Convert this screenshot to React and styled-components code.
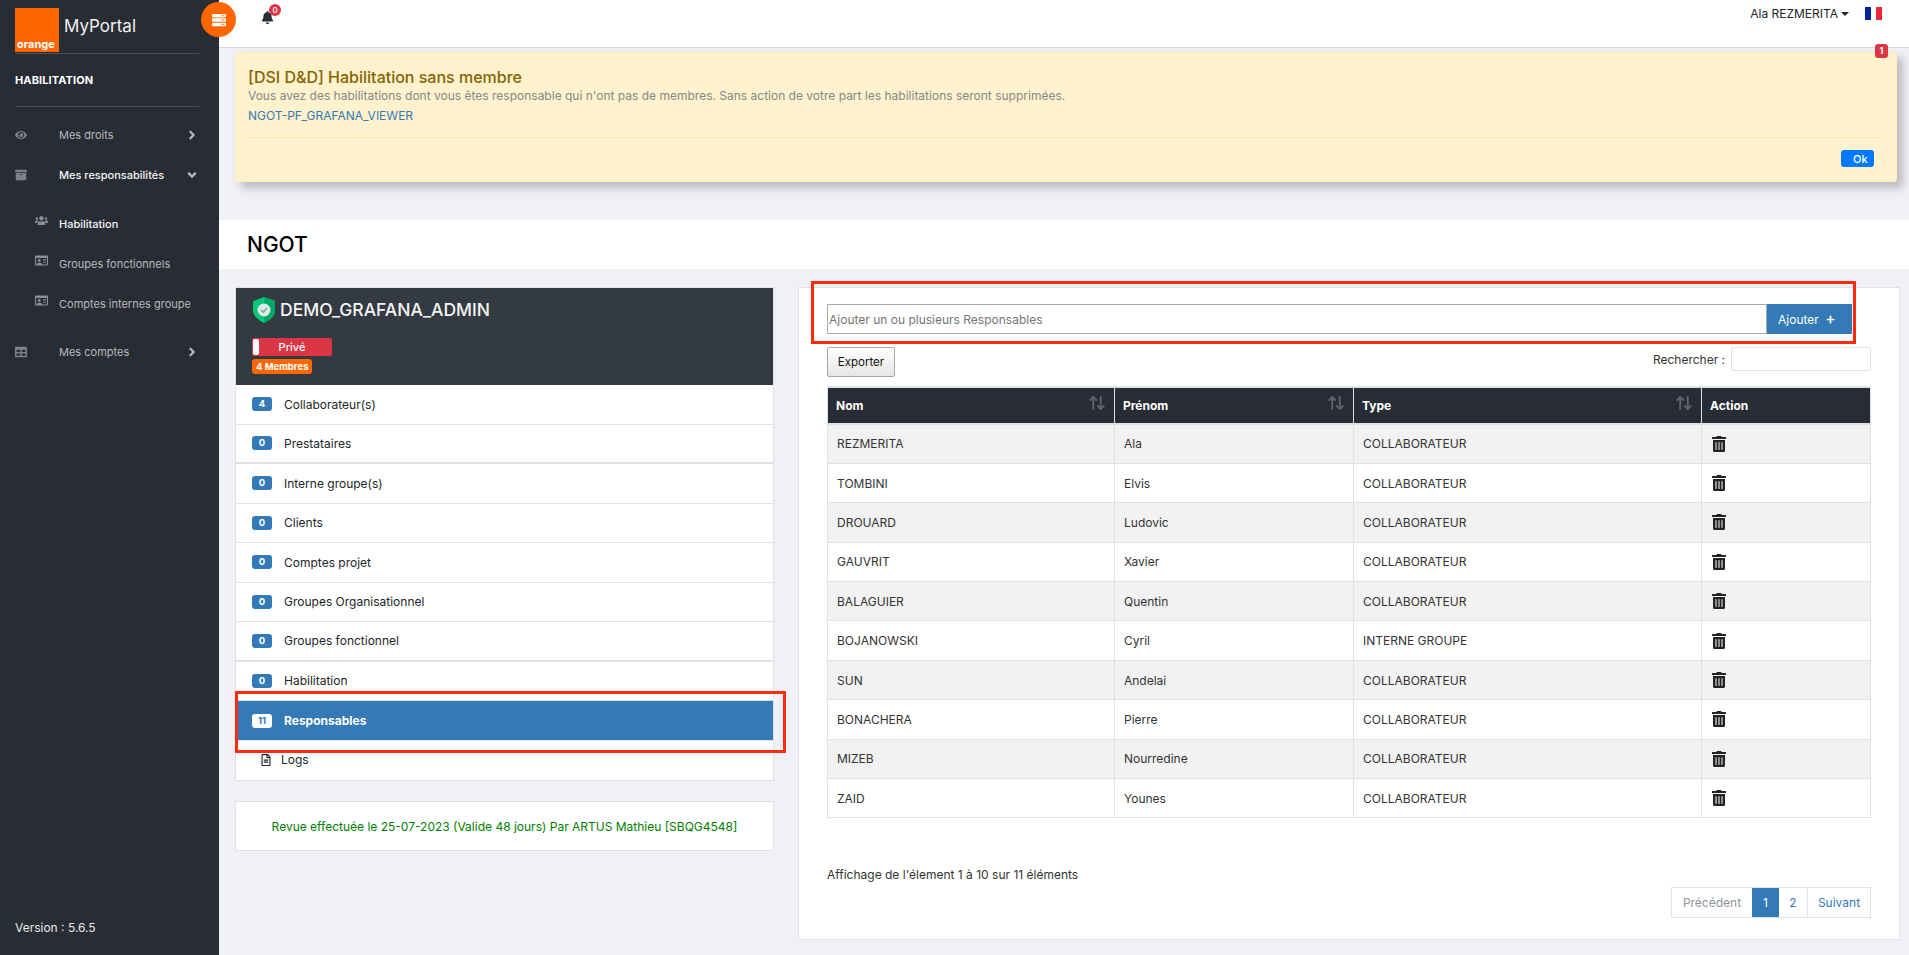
import styled, { createGlobalStyle } from "styled-components";
import {
  FaEye,
  FaArchive,
  FaUsers,
  FaRegIdCard,
  FaTable,
  FaAngleRight,
  FaAngleDown,
  FaBell,
  FaServer,
  FaTrashAlt,
  FaRegFileAlt,
  FaPlus,
} from "react-icons/fa";
import { ArrowUpDown } from "lucide-react";

const GlobalStyle = createGlobalStyle`
  * { box-sizing: border-box; }
  html, body { margin: 0; padding: 0; height: 100%; overflow: hidden; }
  body {
    font-family: Inter, "Noto Sans", sans-serif;
    font-size: 12px;
    color: #212529;
    background: #f0f1f7;
  }
`;

const Page = styled.div`
  position: relative;
  display: flex;
  width: 1909px;
  height: 955px;
  overflow: hidden;
`;

const Sidebar = styled.aside`
  display: flex;
  flex-direction: column;
  width: 219px;
  flex: none;
  padding: 6px 20px 0 15px;
  background: #282c34;
  color: #fff;
`;

const Brand = styled.div`
  display: flex;
  align-items: center;
  gap: 5px;
  height: 48px;
  padding-bottom: 0;
  border-bottom: 1px solid #4a4e55;
`;

const Logo = styled.div`
  display: flex;
  align-items: flex-end;
  width: 44px;
  height: 44px;
  padding: 0 0 1px 2px;
  background: #ff6600;
  font-size: 11px;
  font-weight: 700;
  line-height: 13px;
  color: #fff;
`;

const BrandName = styled.div`
  font-size: 17px;
  margin-bottom: 8px;
  color: #f2f2f2;
`;

const SectionTitle = styled.div`
  display: flex;
  align-items: center;
  height: 53px;
  font-size: 11px;
  font-weight: 700;
  letter-spacing: 0.1px;
  border-bottom: 1px solid #4a4e55;
`;

const Nav = styled.nav`
  display: flex;
  flex-direction: column;
  padding-top: 8px;
`;

const NavItem = styled.div`
  display: flex;
  align-items: center;
  height: 40px;
  padding-left: ${(p) => (p.$sub ? "20px" : "0")};
  font-size: 11px;
  font-weight: ${(p) => (p.$active ? 500 : 400)};
  color: ${(p) => (p.$active ? "#f4f4f4" : "#b6b8bb")};

  svg.lead {
    flex: none;
    width: 12px;
    height: 12px;
    margin-right: 32px;
    color: #7d828a;
  }
`;

const SubIcon = styled.span`
  display: flex;
  flex: none;
  width: 24px;
  margin-top: -8px;
  color: #8b9097;
  font-size: 13px;
`;

const NavLabel = styled.span`
  flex: 1;
`;

const Caret = styled.span`
  display: flex;
  color: #b6b8bb;
  font-size: 14px;
`;

const Version = styled.div`
  margin-top: auto;
  padding-bottom: 20px;
  font-size: 12px;
  color: #e9e9ea;
`;

const ToggleButton = styled.div`
  position: absolute;
  left: 201px;
  top: 2px;
  display: flex;
  align-items: center;
  justify-content: center;
  width: 35px;
  height: 35px;
  border-radius: 50%;
  background: #ff6600;
  color: #fff;
  font-size: 14px;
`;

const Main = styled.main`
  display: flex;
  flex-direction: column;
  flex: 1;
  min-width: 0;
`;

const TopBar = styled.header`
  display: flex;
  align-items: flex-start;
  justify-content: space-between;
  height: 48px;
  padding: 8px 27px 0 42px;
  background: #fff;
  border-bottom: 1px solid #d8d9e0;
`;

const BellWrap = styled.div`
  position: relative;
  margin-top: 3px;
  color: #282c34;
  font-size: 13px;
  line-height: 1;
`;

const BellBadge = styled.span`
  position: absolute;
  left: 8px;
  top: -7px;
  width: 12px;
  height: 12px;
  border-radius: 50%;
  background: #dc3545;
  color: #fff;
  font-size: 8px;
  font-weight: 500;
  line-height: 12px;
  text-align: center;
`;

const UserMenu = styled.div`
  display: flex;
  align-items: center;
  font-size: 12px;
  color: #212529;
  line-height: 12px;
  margin-top: -1px;
`;

const UserCaret = styled.span`
  width: 0;
  height: 0;
  margin: 0 16px 0 3px;
  border-left: 4px solid transparent;
  border-right: 4px solid transparent;
  border-top: 4px solid #212529;
`;

const Flag = styled.span`
  display: flex;
  width: 17px;
  height: 13px;
`;

const FlagBand = styled.span`
  flex: 1;
  background: ${(p) => p.$color};
`;

const Alert = styled.section`
  position: relative;
  margin: 4px 12px 0 16px;
  height: 130px;
  padding: 14px 13px 0 12px;
  background: #fff2cc;
  border: 1px solid #ffeeba;
  border-radius: 3px;
  box-shadow: 6px 6px 8px rgba(90, 85, 90, 0.35);
`;

const AlertTitle = styled.div`
  font-size: 16px;
  line-height: 20px;
  font-weight: 500;
  color: #856404;
`;

const AlertText = styled.div`
  font-size: 12px;
  line-height: 18px;
  color: #86888a;
`;

const AlertLink = styled.a`
  display: block;
  font-size: 12px;
  line-height: 21px;
  color: #337ab7;
`;

const AlertRule = styled.div`
  margin-top: 11px;
  border-top: 1px solid #fbe8b0;
`;

const AlertFooter = styled.div`
  display: flex;
  justify-content: flex-end;
  padding: 12px 9px 0 0;
`;

const OkButton = styled.button`
  width: 33px;
  height: 17px;
  padding: 0 0 0 12px;
  border: 0;
  border-radius: 3px;
  background: #007bff;
  color: #fff;
  font: 500 11px Inter, sans-serif;
  text-align: left;
`;

const CornerBadge = styled.span`
  position: absolute;
  right: 8px;
  top: -9px;
  width: 13px;
  height: 14px;
  border-radius: 3px;
  background: #dc3545;
  color: #fff;
  font-size: 9px;
  font-weight: 700;
  line-height: 14px;
  text-align: center;
`;

const TitleBand = styled.div`
  display: flex;
  align-items: center;
  height: 49px;
  margin-top: 38px;
  padding-left: 28px;
  background: #fff;
  font-size: 21px;
  font-weight: 500;
  color: #000;
`;

const Content = styled.div`
  display: flex;
  align-items: flex-start;
  gap: 24px;
  padding: 18px 11px 0 16px;
`;

const LeftColumn = styled.div`
  display: flex;
  flex-direction: column;
  flex: none;
  width: 539px;
  gap: 20px;
`;

const GroupCard = styled.div`
  background: #fff;
  border: 1px solid #e0e1e5;
`;

const GroupHeader = styled.div`
  height: 97px;
  padding: 8px 16px 0;
  background: #343a42;
  color: #fff;
`;

const GroupTitle = styled.div`
  display: flex;
  align-items: center;
  gap: 4px;
  font-size: 17.5px;
  font-weight: 500;
  line-height: 27px;
  color: #f4f4f4;
`;

const PrivateTag = styled.div`
  position: relative;
  width: 80px;
  height: 18px;
  margin-top: 15px;
  border-radius: 2px;
  background: #dc3545;
  font-size: 11px;
  font-weight: 500;
  line-height: 18px;
  text-align: center;

  &::before {
    content: "";
    position: absolute;
    left: 1px;
    top: 1px;
    width: 6px;
    height: 16px;
    border-radius: 2px;
    background: #fff;
  }
`;

const MembersTag = styled.div`
  display: inline-block;
  margin-top: 3px;
  padding: 0 4px;
  height: 15px;
  border-radius: 3px;
  background: #ff6600;
  font-size: 9.5px;
  font-weight: 700;
  line-height: 15px;
`;

const ListRow = styled.div`
  display: flex;
  align-items: center;
  gap: 12px;
  height: ${(p) => (p.$active ? "40px" : "39.5px")};
  padding-left: 16px;
  font-size: 12px;
  font-weight: ${(p) => (p.$active ? 700 : 400)};
  color: ${(p) => (p.$active ? "#fff" : "#212529")};
  background: ${(p) => (p.$active ? "#337ab7" : "#fff")};
  border-bottom: ${(p) => (p.$thick ? "2px" : "1px")} solid #dfe0e4;
`;

const CountBadge = styled.span`
  display: block;
  min-width: 20px;
  height: 14px;
  padding: 0 4px;
  border-radius: 3px;
  background: ${(p) => (p.$active ? "#fff" : "#337ab7")};
  color: ${(p) => (p.$active ? "#337ab7" : "#fff")};
  font-size: 9.5px;
  font-weight: 700;
  line-height: 14px;
  text-align: center;
`;

const LogsRow = styled.div`
  display: flex;
  align-items: center;
  gap: 9px;
  height: 39px;
  padding: 0 0 2px 24px;
  font-size: 12px;
  color: #212529;
`;

const ReviewCard = styled.div`
  display: flex;
  align-items: center;
  justify-content: center;
  height: 50px;
  background: #fff;
  border: 1px solid #e0e1e5;
  font-size: 12px;
  color: #008000;
`;

const TablePanel = styled.div`
  position: relative;
  display: flex;
  flex-direction: column;
  flex: 1;
  height: 653px;
  padding: 16px 28px 0;
  background: #fff;
  border: 1px solid #e0e1e5;
`;

const AddRow = styled.div`
  display: flex;
  height: 30px;
  margin-right: 19px;
`;

const AddInput = styled.div`
  display: flex;
  align-items: center;
  flex: 1;
  padding-left: 1px;
  border: 1px solid #a9a9a9;
  font-size: 12px;
  color: #757575;
`;

const AddButton = styled.button`
  display: flex;
  align-items: center;
  gap: 7px;
  width: 85px;
  padding-left: 11px;
  border: 0;
  background: #337ab7;
  color: #fff;
  font: 400 12px Inter, sans-serif;

  svg { font-size: 9px; }
`;

const Toolbar = styled.div`
  display: flex;
  align-items: flex-start;
  justify-content: space-between;
  margin-top: 13px;
`;

const ExportButton = styled.button`
  width: 68px;
  height: 30px;
  border: 1px solid #a7a7a7;
  border-radius: 2px;
  background: linear-gradient(#fff, #e6e6e6);
  color: #111;
  font: 400 11.5px Inter, sans-serif;
`;

const SearchBox = styled.div`
  display: flex;
  align-items: center;
  gap: 6px;
  font-size: 12px;
  color: #333;
  margin-bottom: 0;
`;

const SearchInput = styled.div`
  width: 140px;
  height: 24px;
  border: 1px solid #dee2e6;
  border-radius: 2px;
`;

const Table = styled.table`
  width: 1043px;
  margin-top: 9px;
  border-collapse: collapse;
  table-layout: fixed;
  font-size: 12px;
`;

const HeadCell = styled.th`
  position: relative;
  height: 37px;
  padding: 0 8px;
  background: #282c34;
  border: 1px solid #dee2e6;
  border-width: 2px 1px;
  color: #fff;
  font-size: 12px;
  font-weight: 700;
  text-align: left;
`;

const SortIcon = styled.span`
  position: absolute;
  right: 8px;
  top: 6px;
  display: flex;
  color: #5f6368;
`;

const Cell = styled.td`
  height: 39.4px;
  padding: 0 9px;
  border: 1px solid #dee2e6;
  color: #333;
  background: ${(p) => (p.$odd ? "#f2f2f2" : "#fff")};

  svg { display: block; font-size: 16px; color: #222; }
`;

const TableInfo = styled.div`
  margin-top: 49px;
  font-size: 12px;
  line-height: 16px;
  color: #333;
`;

const Pagination = styled.div`
  display: flex;
  align-self: flex-end;
  height: 31px;
  margin-top: 4px;
  border: 1px solid #dee2e6;
  font-size: 12px;
`;

const PageLink = styled.span`
  display: flex;
  align-items: center;
  justify-content: center;
  width: ${(p) => p.$w}px;
  color: ${(p) => (p.$disabled ? "#8f959b" : p.$active ? "#fff" : "#337ab7")};
  background: ${(p) => (p.$active ? "#337ab7" : "#fff")};
  border-left: ${(p) => (p.$sep ? "1px solid #dee2e6" : "0")};
`;

const Highlight = styled.div`
  position: absolute;
  left: ${(p) => p.$x}px;
  top: ${(p) => p.$y}px;
  width: ${(p) => p.$w}px;
  height: ${(p) => p.$h}px;
  border: 3px solid #ff2a0c;
  pointer-events: none;
`;

function ShieldIcon() {
  return (
    <svg width="24" height="26" viewBox="0 0 24 26">
      <path d="M12 0 L23 4 V13 C23 19 18 23 12 26 C6 23 1 19 1 13 V4 Z" fill="#00c878" />
      <path d="M12 0 L23 4 V13 C23 19 18 23 12 26 Z" fill="#00a868" />
      <circle cx="12" cy="13" r="6.5" fill="#dfe8e6" />
      <path d="M9 13 L11.3 15.2 L15 11" fill="none" stroke="#6fa8a0" strokeWidth="1.5" />
    </svg>
  );
}

const members = [
  { count: 4, label: "Collaborateur(s)" },
  { count: 0, label: "Prestataires", thick: true },
  { count: 0, label: "Interne groupe(s)" },
  { count: 0, label: "Clients" },
  { count: 0, label: "Comptes projet" },
  { count: 0, label: "Groupes Organisationnel" },
  { count: 0, label: "Groupes fonctionnel", thick: true },
  { count: 0, label: "Habilitation" },
  { count: 11, label: "Responsables", active: true },
];

const people = [
  ["REZMERITA", "Ala", "COLLABORATEUR"],
  ["TOMBINI", "Elvis", "COLLABORATEUR"],
  ["DROUARD", "Ludovic", "COLLABORATEUR"],
  ["GAUVRIT", "Xavier", "COLLABORATEUR"],
  ["BALAGUIER", "Quentin", "COLLABORATEUR"],
  ["BOJANOWSKI", "Cyril", "INTERNE GROUPE"],
  ["SUN", "Andelai", "COLLABORATEUR"],
  ["BONACHERA", "Pierre", "COLLABORATEUR"],
  ["MIZEB", "Nourredine", "COLLABORATEUR"],
  ["ZAID", "Younes", "COLLABORATEUR"],
];

export default function App() {
  return (
    <Page>
      <GlobalStyle />
      <Sidebar>
        <Brand>
          <Logo>orange</Logo>
          <BrandName>MyPortal</BrandName>
        </Brand>
        <SectionTitle>HABILITATION</SectionTitle>
        <Nav>
          <NavItem>
            <FaEye className="lead" />
            <NavLabel>Mes droits</NavLabel>
            <Caret><FaAngleRight /></Caret>
          </NavItem>
          <NavItem $active>
            <FaArchive className="lead" />
            <NavLabel>Mes responsabilités</NavLabel>
            <Caret><FaAngleDown /></Caret>
          </NavItem>
          <NavItem $sub $active style={{ marginTop: 9 }}>
            <SubIcon><FaUsers /></SubIcon>
            <NavLabel>Habilitation</NavLabel>
          </NavItem>
          <NavItem $sub>
            <SubIcon><FaRegIdCard /></SubIcon>
            <NavLabel>Groupes fonctionnels</NavLabel>
          </NavItem>
          <NavItem $sub>
            <SubIcon><FaRegIdCard /></SubIcon>
            <NavLabel>Comptes internes groupe</NavLabel>
          </NavItem>
          <NavItem style={{ marginTop: 8 }}>
            <FaTable className="lead" />
            <NavLabel>Mes comptes</NavLabel>
            <Caret><FaAngleRight /></Caret>
          </NavItem>
        </Nav>
        <Version>Version : 5.6.5</Version>
      </Sidebar>
      <ToggleButton><FaServer /></ToggleButton>

      <Main>
        <TopBar>
          <BellWrap>
            <FaBell />
            <BellBadge>0</BellBadge>
          </BellWrap>
          <UserMenu>
            Ala REZMERITA
            <UserCaret />
            <Flag>
              <FlagBand $color="#002395" />
              <FlagBand $color="#fff" />
              <FlagBand $color="#ed2939" />
            </Flag>
          </UserMenu>
        </TopBar>

        <Alert>
          <CornerBadge>1</CornerBadge>
          <AlertTitle>[DSI D&amp;D] Habilitation sans membre</AlertTitle>
          <AlertText>
            Vous avez des habilitations dont vous êtes responsable qui n'ont pas de membres. Sans action de votre part les habilitations seront supprimées.
          </AlertText>
          <AlertLink>NGOT-PF_GRAFANA_VIEWER</AlertLink>
          <AlertRule />
          <AlertFooter>
            <OkButton>Ok</OkButton>
          </AlertFooter>
        </Alert>

        <TitleBand>NGOT</TitleBand>

        <Content>
          <LeftColumn>
            <GroupCard>
              <GroupHeader>
                <GroupTitle>
                  <ShieldIcon />
                  DEMO_GRAFANA_ADMIN
                </GroupTitle>
                <PrivateTag>Privé</PrivateTag>
                <MembersTag>4 Membres</MembersTag>
              </GroupHeader>
              {members.map((m) => (
                <ListRow key={m.label} $active={m.active} $thick={m.thick}>
                  <CountBadge $active={m.active}>{m.count}</CountBadge>
                  {m.label}
                </ListRow>
              ))}
              <LogsRow>
                <FaRegFileAlt size={12} />
                Logs
              </LogsRow>
            </GroupCard>
            <ReviewCard>Revue effectuée le 25-07-2023 (Valide 48 jours) Par ARTUS Mathieu [SBQG4548]</ReviewCard>
          </LeftColumn>

          <TablePanel>
            <AddRow>
              <AddInput>Ajouter un ou plusieurs Responsables</AddInput>
              <AddButton>Ajouter <FaPlus /></AddButton>
            </AddRow>
            <Toolbar>
              <ExportButton>Exporter</ExportButton>
              <SearchBox>
                Rechercher :
                <SearchInput />
              </SearchBox>
            </Toolbar>
            <Table>
              <colgroup>
                <col style={{ width: 287 }} />
                <col style={{ width: 239 }} />
                <col style={{ width: 348 }} />
                <col style={{ width: 169 }} />
              </colgroup>
              <thead>
                <tr>
                  <HeadCell>Nom<SortIcon><ArrowUpDown size={18} strokeWidth={2.6} /></SortIcon></HeadCell>
                  <HeadCell>Prénom<SortIcon><ArrowUpDown size={18} strokeWidth={2.6} /></SortIcon></HeadCell>
                  <HeadCell>Type<SortIcon><ArrowUpDown size={18} strokeWidth={2.6} /></SortIcon></HeadCell>
                  <HeadCell>Action</HeadCell>
                </tr>
              </thead>
              <tbody>
                {people.map((p, i) => (
                  <tr key={p[0]}>
                    <Cell $odd={i % 2 === 0}>{p[0]}</Cell>
                    <Cell $odd={i % 2 === 0}>{p[1]}</Cell>
                    <Cell $odd={i % 2 === 0}>{p[2]}</Cell>
                    <Cell $odd={i % 2 === 0}><FaTrashAlt /></Cell>
                  </tr>
                ))}
              </tbody>
            </Table>
            <TableInfo>Affichage de l'élement 1 à 10 sur 11 éléments</TableInfo>
            <Pagination>
              <PageLink $w={80} $disabled>Précédent</PageLink>
              <PageLink $w={27} $active>1</PageLink>
              <PageLink $w={28}>2</PageLink>
              <PageLink $w={63} $sep>Suivant</PageLink>
            </Pagination>
          </TablePanel>
        </Content>
      </Main>

      <Highlight $x={235} $y={691} $w={551} $h={62} />
      <Highlight $x={811} $y={281} $w={1045} $h={63} />
    </Page>
  );
}
